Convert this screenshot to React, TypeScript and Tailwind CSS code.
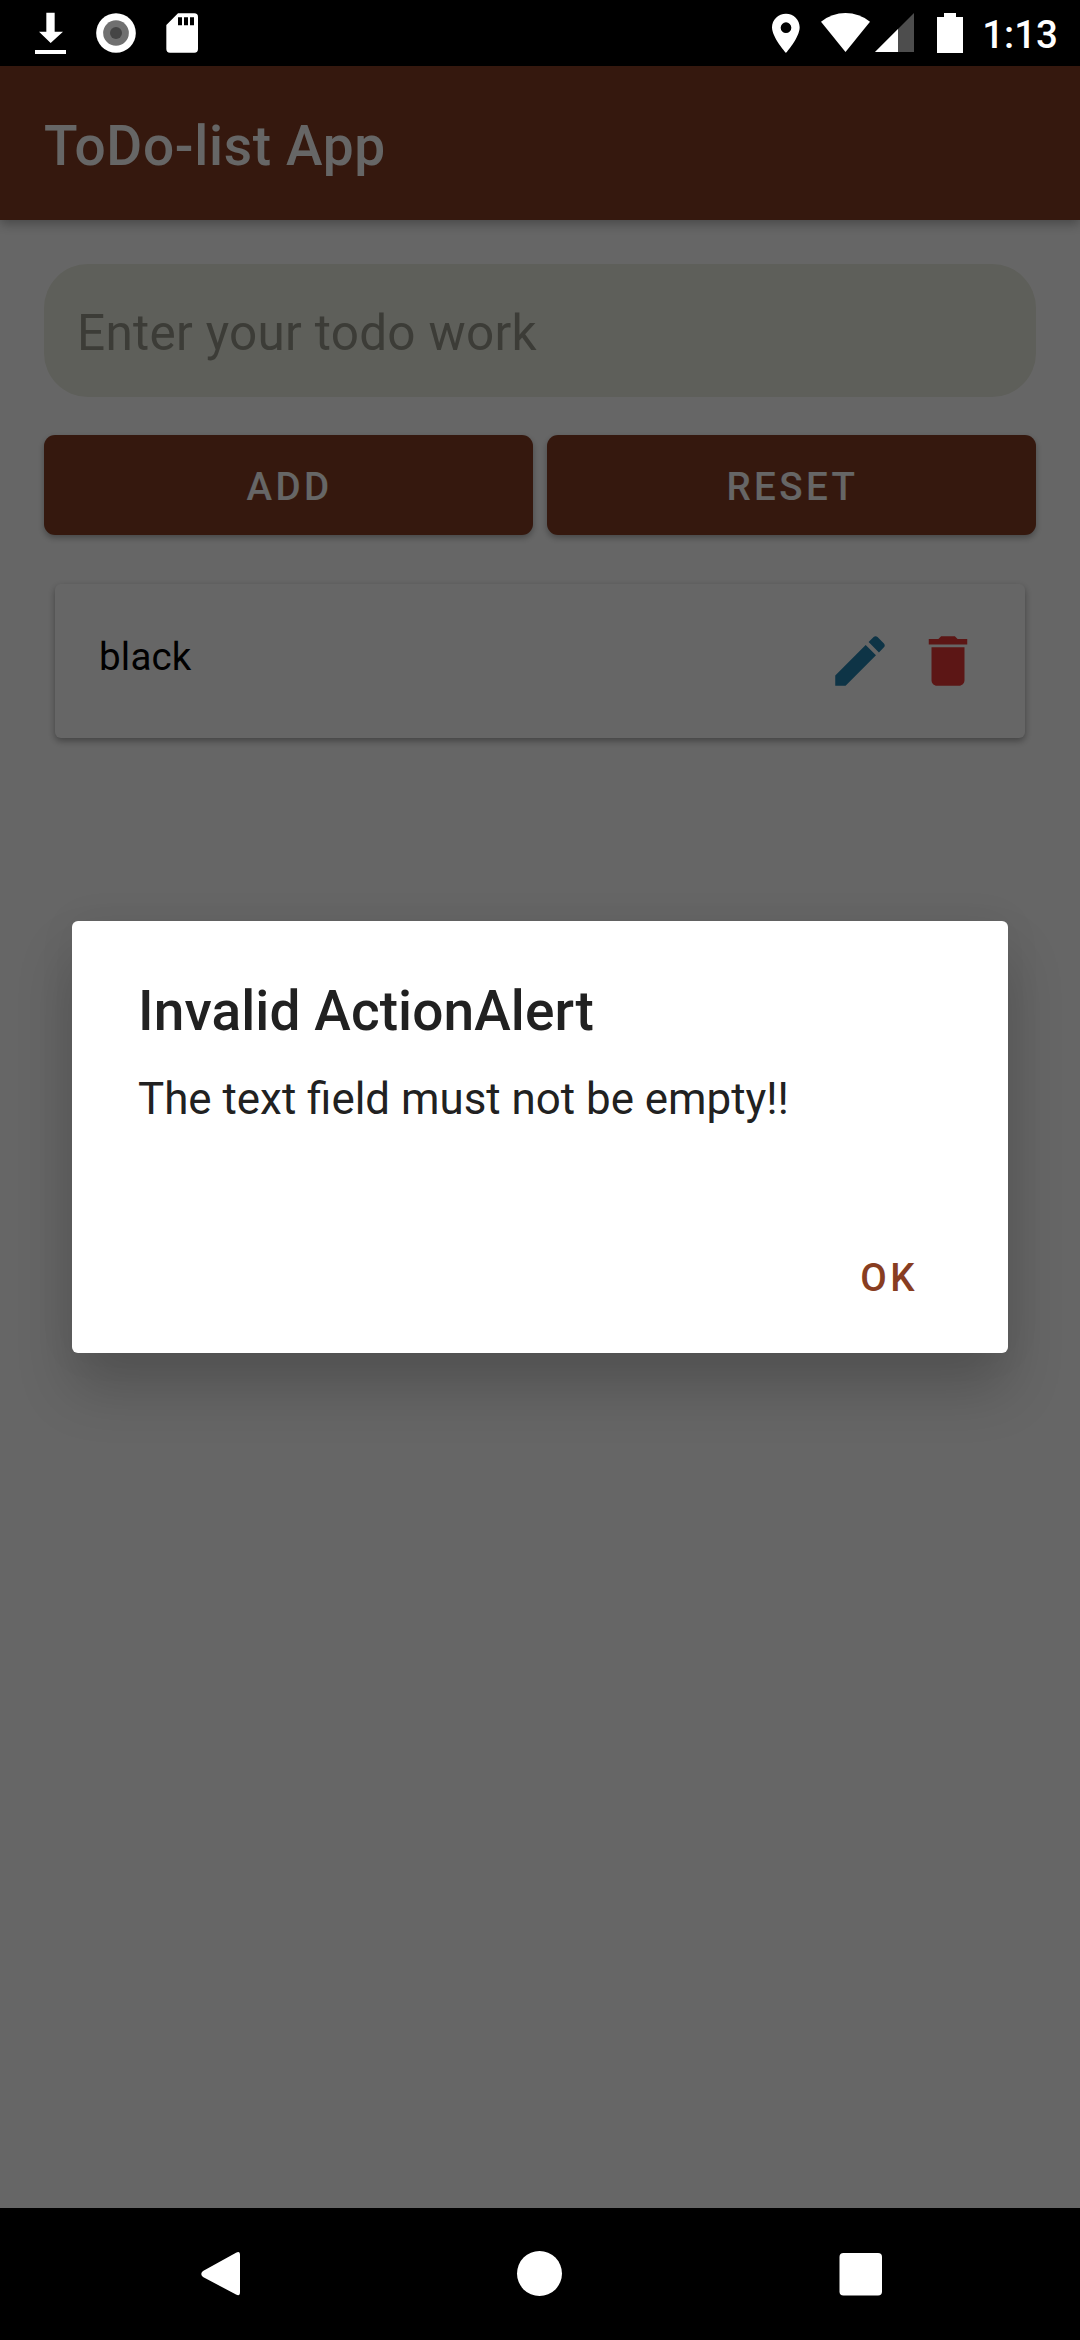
import React from "react";

function StatusBar() {
  return (
    <div className="flex h-[66px] shrink-0 items-start justify-between bg-black pt-3 text-white">
      <div className="flex items-start pl-[35px]">
        <svg className="h-[43px] w-[31px]" viewBox="105 36 93 129" fill="currentColor">
          <path d="M139 38h25v57h25l-37 34-35-34h22zM105 150h93v12h-93z" />
        </svg>
        <svg className="ml-[30px] h-[43px] w-10" viewBox="288 36 120 129">
          <circle cx="348" cy="99" r="59.5" fill="#fff" />
          <circle cx="348" cy="99" r="38.5" fill="#707070" />
          <circle cx="348" cy="99" r="18" fill="#454545" />
        </svg>
        <svg className="ml-[30px] h-[43px] w-8" viewBox="498 36 96 129" fill="currentColor">
          <path
            fillRule="evenodd"
            d="M534 40h49q11 0 11 11v96q0 11-11 11h-73q-11 0-11-11V75zM534 52v24h12V52zM552 52v24h12V52zM570 52v24h12V52z"
          />
        </svg>
      </div>
      <div className="flex items-start">
        <svg className="h-[43px] w-7" viewBox="95 36 84 129" fill="currentColor">
          <path
            fillRule="evenodd"
            d="M137 41c-23 0-42 18-42 41 0 31 42 77 42 77s41-46 41-77c0-23-18-41-41-41zm0 26a16 16 0 1 1 0 32 16 16 0 0 1 0-32z"
          />
        </svg>
        <svg className="ml-[21px] h-[43px] w-[49px]" viewBox="243 36 147 129" fill="currentColor">
          <path d="M316.500 156 243 65q33-26 73.500-26T390 65z" />
        </svg>
        <svg className="ml-[5px] h-[43px] w-[39px]" viewBox="405 36 117 129">
          <path d="M405 156 522 39v117z" fill="#4d4d4d" />
          <path d="M405 156 474 87v69z" fill="#fff" />
        </svg>
        <svg className="ml-[23px] h-[43px] w-[26px]" viewBox="591 36 78 129" fill="currentColor">
          <path d="M612 39h36v12h21v108h-78V51h21z" />
        </svg>
        <span className="mt-[2px] w-[117px] pr-[22px] text-right text-[38.5px] leading-[41px] font-medium">
          1:13
        </span>
      </div>
    </div>
  );
}

function AppButton({ label }: { label: string }) {
  return (
    <button className="flex h-[100px] flex-1 items-center justify-center rounded-[11px] bg-[#853e25] pt-1 pl-[2px] text-[38.5px] font-medium tracking-[0.0893em] text-white shadow-[0_3px_6px_rgba(0,0,0,0.3)]">
      {label}
    </button>
  );
}

function TodoCard({ text }: { text: string }) {
  return (
    <div className="mx-[11px] mt-[49px] flex h-[154px] items-start justify-between rounded-[6px] bg-white pl-11 pr-[44px] shadow-[0_3px_7px_rgba(0,0,0,0.35)]">
      <span className="mt-[50px] text-[38.5px] leading-[46px] tracking-[0.2px] text-black">{text}</span>
      <div className="mt-[44px] flex gap-[22px]">
        <svg className="size-[66px]" viewBox="0 0 24 24" fill="#2382b0">
          <path d="M3 17.250V21h3.750L17.810 9.940l-3.750-3.750L3 17.250zM20.710 7.040c.39-.39.39-1.020 0-1.410l-2.340-2.340c-.39-.39-1.020-.39-1.410 0l-1.830 1.830 3.750 3.750 1.830-1.830z" />
        </svg>
        <svg className="size-[66px]" viewBox="0 0 24 24" fill="#e53935">
          <path d="M6 19c0 1.100.9 2 2 2h8c1.100 0 2-.9 2-2V7H6v12zM19 4h-3.500l-1-1h-5l-1 1H5v2h14V4z" />
        </svg>
      </div>
    </div>
  );
}

function AlertDialog() {
  return (
    <div
      role="alertdialog"
      className="flex h-[432px] w-[936px] flex-col rounded-[6px] bg-white px-[66px] text-[#212121] shadow-[0_36px_56px_rgba(0,0,0,0.19),0_0_40px_rgba(0,0,0,0.05)]"
    >
      <h2 className="mt-[58px] text-[55px] leading-[64px] font-medium tracking-[0.11px]">
        Invalid ActionAlert
      </h2>
      <p className="mt-[30px] text-[43.88px] leading-[52px]">The text field must not be empty!!</p>
      <button className="mt-[130px] mr-[24px] self-end text-[38.5px] leading-[46px] font-medium tracking-[0.0893em] text-[#883d21]">
        OK
      </button>
    </div>
  );
}

function NavBar() {
  return (
    <div className="flex h-[132px] shrink-0 items-start bg-black pt-[42px] pl-[201px] text-white">
      <svg className="h-[48px] w-[40px]" viewBox="0 0 40 48" fill="currentColor">
        <path d="M35 2.800Q39 .500 39 5v37q0 5-4 2.500L2 27q-3.500-3 0-6z" />
      </svg>
      <svg className="ml-[275px] h-[48px] w-[47px]" viewBox="0 0 47 48" fill="currentColor">
        <circle cx="23.500" cy="23.500" r="22.500" />
      </svg>
      <svg className="ml-[276px] h-[48px] w-[44px]" viewBox="0 0 44 48" fill="currentColor">
        <rect x=".5" y="3" width="42.500" height="42.500" rx="4" />
      </svg>
    </div>
  );
}

export default function App() {
  return (
    <div className="flex h-[2340px] w-[1080px] flex-col overflow-hidden bg-black font-[Roboto,sans-serif]">
      <StatusBar />
      <main className="relative flex-1 overflow-hidden bg-white">
        <header className="flex h-[154px] items-center bg-[#853e25] pt-1.5 pl-11 shadow-[0_4px_11px_rgba(0,0,0,0.3)]">
          <h1 className="text-[55px] font-medium tracking-[0.0125em] text-white">ToDo-list App</h1>
        </header>
        <div className="px-11 pt-11">
          <div className="flex h-[133px] items-center rounded-[44px] bg-[#ebede0] pt-1.5 pl-[33px] text-[49.500px] tracking-[0.28px] text-[#96978b]">
            Enter your todo work
          </div>
          <div className="mt-[38px] flex gap-[14px]">
            <AppButton label="ADD" />
            <AppButton label="RESET" />
          </div>
          <TodoCard text="black" />
        </div>
        <div className="absolute inset-0 flex items-center justify-center bg-black/60">
          <AlertDialog />
        </div>
      </main>
      <NavBar />
    </div>
  );
}
